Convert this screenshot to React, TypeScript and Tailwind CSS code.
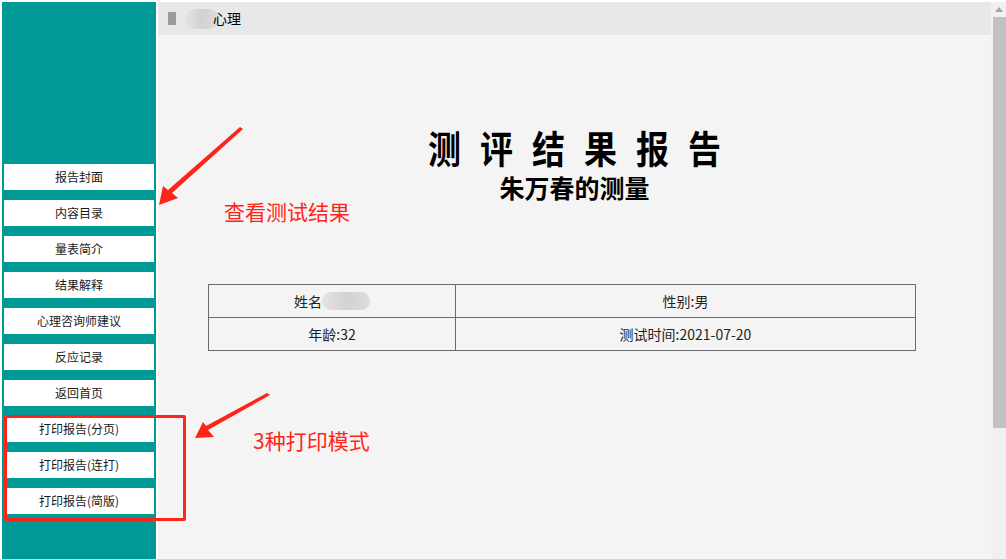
import React from 'react'

const menu = ['报告封面', '内容目录', '量表简介', '结果解释', '心理咨询师建议', '反应记录', '返回首页']
const printMenu = ['打印报告(分页)', '打印报告(连打)', '打印报告(简版)']

function MenuButton({ label }: { label: string }) {
  return (
    <div className="h-[26px] bg-white flex items-center justify-center text-[12px] text-[#1a1a1a] leading-none">
      {label}
    </div>
  )
}

function Blur({ className }: { className: string }) {
  return <span className={`inline-block rounded-full bg-gradient-to-r from-[#e4e4e4] via-[#d2d2d2] to-[#dcdcdc] ${className}`} />
}

export default function App() {
  return (
    <div className="relative w-[1006px] h-[559px] overflow-hidden bg-white pt-[2px] pl-[2px] flex font-['Noto_Sans_CJK_SC',sans-serif]">
      {/* sidebar */}
      <aside className="w-[154px] bg-[#009a96] flex flex-col gap-[10px] pt-[162px] px-[2px]">
        {menu.map((m) => (
          <MenuButton key={m} label={m} />
        ))}
        {printMenu.map((m) => (
          <MenuButton key={m} label={m} />
        ))}
      </aside>

      {/* main */}
      <main className="ml-[2px] flex-1 flex flex-col">
        <header className="h-[33px] bg-[#e8e8e8] flex items-center pl-[10px] text-[14px] text-black">
          <span className="w-[8px] h-[13px] bg-[#9c9c9c]" />
          <span className="relative ml-[9px] flex items-center">
            <Blur className="w-[34px] h-[20px]" />
            <span className="-ml-[6px]">心理</span>
          </span>
        </header>
        <section className="flex-1 bg-[#f4f4f4] flex flex-col items-center">
          <h1 className="mt-[95px] h-[34px] leading-[34px] text-[33px] font-bold tracking-[19px] pl-[19px] text-black scale-y-[1.15]">
            测评结果报告
          </h1>
          <h2 className="mt-[9px] h-[28px] leading-[28px] text-[25px] font-bold text-black">朱万春的测量</h2>
          <table className="mt-[83px] self-start ml-[50px] w-[708px] border-collapse text-[14px] text-[#222]">
            <tbody>
              <tr className="h-[33px]">
                <td className="w-[247px] border border-[#6a6a6a] text-center">
                  <span className="inline-flex items-center">
                    姓名
                    <Blur className="w-[48px] h-[18px]" />
                  </span>
                </td>
                <td className="border border-[#6a6a6a] text-center">性别:男</td>
              </tr>
              <tr className="h-[33px]">
                <td className="border border-[#6a6a6a] text-center">年龄:32</td>
                <td className="border border-[#6a6a6a] text-center">测试时间:2021-07-20</td>
              </tr>
            </tbody>
          </table>
        </section>
      </main>

      {/* scrollbar */}
      <div className="w-[15px] bg-[#f0f0f0] flex flex-col items-end">
        <div className="h-[15px] w-full flex items-center justify-center">
          <svg width="8" height="5" viewBox="0 0 8 5">
            <polygon points="4,0 8,5 0,5" fill="#a3a3a3" />
          </svg>
        </div>
        <div className="w-[13px] h-[411px] bg-[#c1c1c1]" />
      </div>

      {/* annotations */}
      <div className="absolute left-[4px] top-[415px] w-[182px] h-[106px] border-[3px] border-[#ff2418] rounded-[2px]" />
      <svg className="absolute left-0 top-0 pointer-events-none" width="1006" height="559">
        <polygon
          points="243,129 172,193 178,198 159,205 163,186 168,190 240,127"
          fill="#ff2418"
        />
        <polygon
          points="270,395 208,430 214,437 195,438 203,422 206,426 267,393"
          fill="#ff2418"
        />
      </svg>
      <span className="absolute left-[224px] top-[197px] text-[21px] leading-[28px] text-[#ff2418]">查看测试结果</span>
      <span className="absolute left-[253px] top-[426px] text-[21px] leading-[28px] text-[#ff2418]">3种打印模式</span>
    </div>
  )
}
